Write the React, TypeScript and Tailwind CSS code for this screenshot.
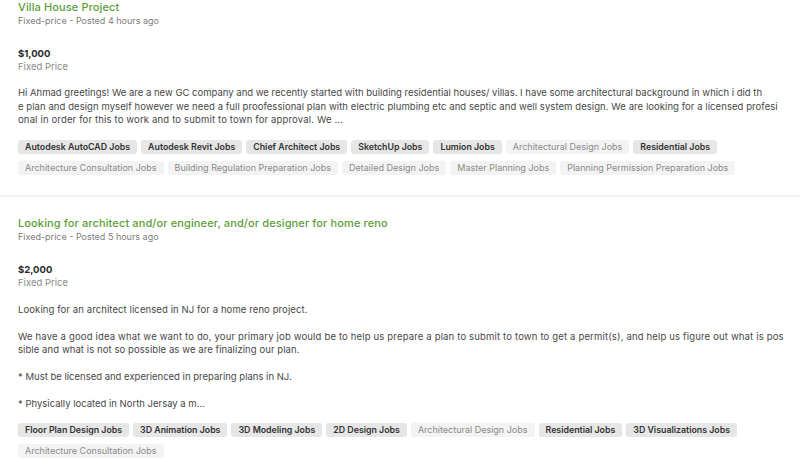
import React from "react";

type Tag = { label: string; strong: boolean };

const tags1: Tag[][] = [
  [
    { label: "Autodesk AutoCAD Jobs", strong: true },
    { label: "Autodesk Revit Jobs", strong: true },
    { label: "Chief Architect Jobs", strong: true },
    { label: "SketchUp Jobs", strong: true },
    { label: "Lumion Jobs", strong: true },
    { label: "Architectural Design Jobs", strong: false },
    { label: "Residential Jobs", strong: true },
  ],
  [
    { label: "Architecture Consultation Jobs", strong: false },
    { label: "Building Regulation Preparation Jobs", strong: false },
    { label: "Detailed Design Jobs", strong: false },
    { label: "Master Planning Jobs", strong: false },
    { label: "Planning Permission Preparation Jobs", strong: false },
  ],
];

const tags2: Tag[][] = [
  [
    { label: "Floor Plan Design Jobs", strong: true },
    { label: "3D Animation Jobs", strong: true },
    { label: "3D Modeling Jobs", strong: true },
    { label: "2D Design Jobs", strong: true },
    { label: "Architectural Design Jobs", strong: false },
    { label: "Residential Jobs", strong: true },
    { label: "3D Visualizations Jobs", strong: true },
  ],
  [{ label: "Architecture Consultation Jobs", strong: false }],
];

function Tags({ rows }: { rows: Tag[][] }) {
  return (
    <div className="flex flex-col gap-[7px]">
      {rows.map((row, i) => (
        <div key={i} className="flex gap-[4px]">
          {row.map((t) => (
            <span
              key={t.label}
              className={
                t.strong
                  ? "h-[14px] px-[7px] rounded-[3px] bg-[#e6e6e6] text-[#333333] font-semibold text-[8.8px] leading-[14px] whitespace-nowrap"
                  : "h-[14px] px-[7px] rounded-[3px] bg-[#f3f3f3] text-[#8a8a8a] text-[9px] leading-[14px] whitespace-nowrap"
              }
            >
              {t.label}
            </span>
          ))}
        </div>
      ))}
    </div>
  );
}

function Header({ title, meta, price }: { title: string; meta: string; price: string }) {
  return (
    <>
      <div className="text-[11px] tracking-[0.12px] leading-[14px] font-medium text-[#5a9e3a] whitespace-nowrap">{title}</div>
      <div className="mt-[1px] text-[9px] leading-[12px] text-[#7d7d7d] whitespace-nowrap">{meta}</div>
      <div className="mt-[20px] text-[9.5px] leading-[13px] font-bold text-[#2a2a2a]">{price}</div>
      <div className="text-[9.5px] leading-[13px] text-[#8a8a8a]">Fixed Price</div>
    </>
  );
}

export default function App() {
  return (
    <div
      className="w-[800px] h-[460px] overflow-hidden bg-white"
      style={{ fontFamily: "Inter, 'Open Sans', sans-serif" }}
    >
      <div className="px-[18px] pb-[20px]">
        <Header title="Villa House Project" meta="Fixed-price - Posted 4 hours ago" price="$1,000" />
        <div className="mt-[13px] text-[9.5px] leading-[13.5px] text-[#474747] whitespace-nowrap">
          <div>Hi Ahmad greetings! We are a new GC company and we recently started with building residential houses/ villas. I have some architectural background in which i did th</div>
          <div className="tracking-[0.07px]">e plan and design myself however we need a full proofessional plan with electric plumbing etc and septic and well system design. We are looking for a licensed profesi</div>
          <div className="tracking-[0.16px]">onal in order for this to work and to submit to town for approval. We ...</div>
        </div>
        <div className="mt-[13px]">
          <Tags rows={tags1} />
        </div>
      </div>
      <div className="h-[2px] bg-[#f2f2f2]" />
      <div className="px-[18px] pt-[19px]">
        <Header
          title="Looking for architect and/or engineer, and/or designer for home reno"
          meta="Fixed-price - Posted 5 hours ago"
          price="$2,000"
        />
        <div className="mt-[14px] text-[9.5px] leading-[13.5px] text-[#474747] whitespace-nowrap flex flex-col gap-[13.5px]">
          <div className="tracking-[0.1px]">Looking for an architect licensed in NJ for a home reno project.</div>
          <div>
            <div className="tracking-[0.165px]">We have a good idea what we want to do, your primary job would be to help us prepare a plan to submit to town to get a permit(s), and help us figure out what is pos</div>
            <div className="tracking-[0.08px]">sible and what is not so possible as we are finalizing our plan.</div>
          </div>
          <div>* Must be licensed and experienced in preparing plans in NJ.</div>
          <div>* Physically located in North Jersay a m...</div>
        </div>
        <div className="mt-[12px]">
          <Tags rows={tags2} />
        </div>
      </div>
    </div>
  );
}
